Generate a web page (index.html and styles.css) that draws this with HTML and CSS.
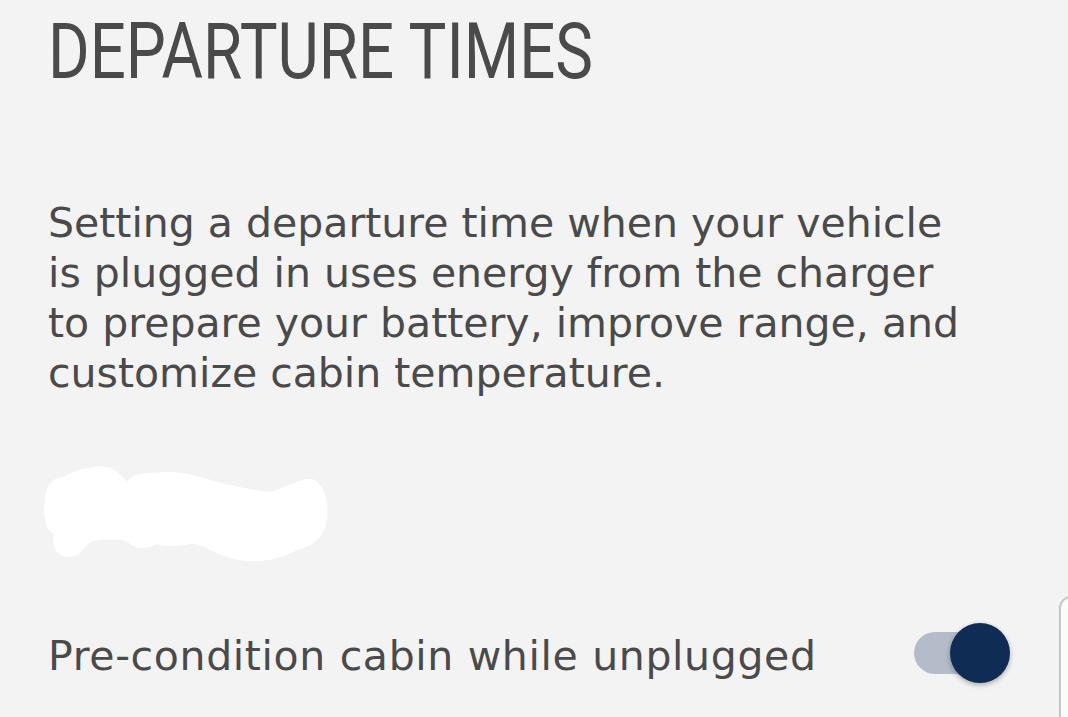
FILE: index.html
```html
<!DOCTYPE html>
<html>
<head>
<meta charset="utf-8">
<link rel="stylesheet" href="styles.css">
</head>
<body>
<div class="screen">
  <h1 class="title"><span class="title-text">DEPARTURE TIMES</span></h1>
  <div class="desc">
    <div class="line">Setting a departure time when your vehicle</div>
    <div class="line">is plugged in uses energy from the charger</div>
    <div class="line">to prepare your battery, improve range, and</div>
    <div class="line">customize cabin temperature.</div>
  </div>
  <div class="redacted"><svg width="295" height="110" viewBox="0 0 295 110"><path d="M5 35 C8 22 14 18 23 17 C35 10 55 4 67 7 C78 10 84 18 87 22 C92 14 105 12 133 12 C160 14 180 26 230 32 C250 26 265 16 275 20 C285 28 289 40 287 60 C285 78 270 88 257 90 C235 102 210 104 190 98 C170 92 160 82 150 84 C130 88 122 86 117 84 C110 88 100 90 93 86 C85 80 82 79 70 80 C52 78 48 84 43 90 C36 98 25 100 17 92 C12 86 14 78 13 73 C4 70 3 50 5 35 Z" fill="#ffffff"/></svg></div>
  <div class="row">
    <span class="row-label">Pre-condition cabin while unplugged</span>
    <div class="toggle"><div class="track"></div><div class="knob"></div></div>
  </div>
  <div class="edge-card"></div>
</div>
</body>
</html>
```
FILE: styles.css
```css
html, body { margin: 0; padding: 0; }
body { background: #f3f3f3; width: 1068px; height: 717px; overflow: hidden; font-family: "DejaVu Sans", "Open Sans", sans-serif; color: #4a4a4a; }
.screen { position: relative; width: 1068px; height: 717px; padding: 0 0 0 48px; box-sizing: border-box; }
.title { margin: 0; padding-top: 12px; font-family: Roboto, sans-serif; font-weight: 400; font-size: 77px; line-height: 80px; height: 80px; color: #4a4a4a; white-space: nowrap; }
.title-text { display: inline-block; transform: scaleX(0.825); transform-origin: 0 50%; }
.desc { margin: 106px 0 0 0; font-size: 41px; white-space: nowrap; }
.line { height: 50px; line-height: 50px; }
.redacted { margin: 62px 0 0 -8px; height: 110px; }
.redacted svg { display: block; }
.row { display: flex; align-items: center; justify-content: space-between; margin-top: 53px; width: 962px; height: 60px; }
.row-label { font-size: 41px; line-height: 50px; padding-top: 6px; letter-spacing: 0.65px; }
.toggle { position: relative; width: 96px; height: 60px; }
.track { position: absolute; left: 0; top: 9px; width: 78px; height: 42px; border-radius: 21px; background: #b3bcc8; }
.knob { position: absolute; left: 36px; top: 0; width: 60px; height: 60px; border-radius: 50%; background: #0f2d54; box-shadow: 0 2px 5px rgba(0,0,0,0.3); }
.edge-card { position: absolute; left: 1059px; top: 596px; width: 40px; height: 140px; border: 2px solid #c8c8c8; border-radius: 12px 0 0 0; background: #fbfbfb; }
```
